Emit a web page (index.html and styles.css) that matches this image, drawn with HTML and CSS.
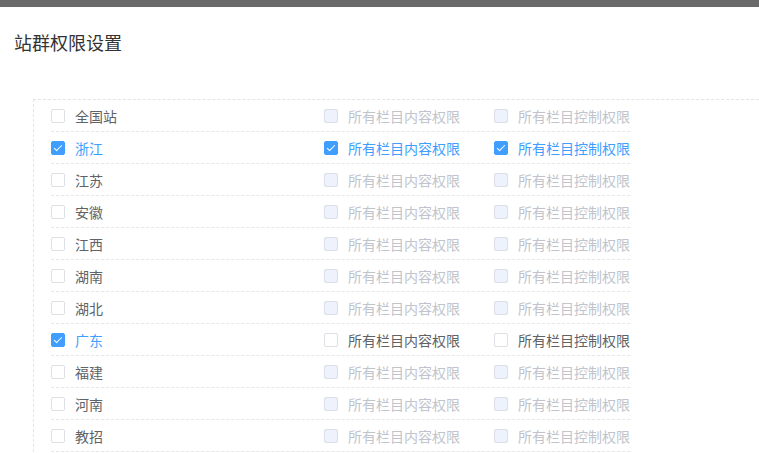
FILE: index.html
```html
<!DOCTYPE html>
<html>

<head>
    <title>站群权限设置</title>
    <link rel="stylesheet" href="styles.css">
</head>

<body>
    <div class="topbar"></div>
    <h2 class="title">站群权限设置</h2>

    <div class="site-list">
        <div class="row">
            <label class="check"><span class="box"></span><span class="text">全国站</span></label>
            <label class="check disabled"><span class="box"></span><span class="text">所有栏目内容权限</span></label>
            <label class="check disabled"><span class="box"></span><span class="text">所有栏目控制权限</span></label>
        </div>
        <div class="row">
            <label class="check checked"><span class="box"></span><span class="text">浙江</span></label>
            <label class="check checked"><span class="box"></span><span class="text">所有栏目内容权限</span></label>
            <label class="check checked"><span class="box"></span><span class="text">所有栏目控制权限</span></label>
        </div>
        <div class="row">
            <label class="check"><span class="box"></span><span class="text">江苏</span></label>
            <label class="check disabled"><span class="box"></span><span class="text">所有栏目内容权限</span></label>
            <label class="check disabled"><span class="box"></span><span class="text">所有栏目控制权限</span></label>
        </div>
        <div class="row">
            <label class="check"><span class="box"></span><span class="text">安徽</span></label>
            <label class="check disabled"><span class="box"></span><span class="text">所有栏目内容权限</span></label>
            <label class="check disabled"><span class="box"></span><span class="text">所有栏目控制权限</span></label>
        </div>
        <div class="row">
            <label class="check"><span class="box"></span><span class="text">江西</span></label>
            <label class="check disabled"><span class="box"></span><span class="text">所有栏目内容权限</span></label>
            <label class="check disabled"><span class="box"></span><span class="text">所有栏目控制权限</span></label>
        </div>
        <div class="row">
            <label class="check"><span class="box"></span><span class="text">湖南</span></label>
            <label class="check disabled"><span class="box"></span><span class="text">所有栏目内容权限</span></label>
            <label class="check disabled"><span class="box"></span><span class="text">所有栏目控制权限</span></label>
        </div>
        <div class="row">
            <label class="check"><span class="box"></span><span class="text">湖北</span></label>
            <label class="check disabled"><span class="box"></span><span class="text">所有栏目内容权限</span></label>
            <label class="check disabled"><span class="box"></span><span class="text">所有栏目控制权限</span></label>
        </div>
        <div class="row">
            <label class="check checked"><span class="box"></span><span class="text">广东</span></label>
            <label class="check"><span class="box"></span><span class="text">所有栏目内容权限</span></label>
            <label class="check"><span class="box"></span><span class="text">所有栏目控制权限</span></label>
        </div>
        <div class="row">
            <label class="check"><span class="box"></span><span class="text">福建</span></label>
            <label class="check disabled"><span class="box"></span><span class="text">所有栏目内容权限</span></label>
            <label class="check disabled"><span class="box"></span><span class="text">所有栏目控制权限</span></label>
        </div>
        <div class="row">
            <label class="check"><span class="box"></span><span class="text">河南</span></label>
            <label class="check disabled"><span class="box"></span><span class="text">所有栏目内容权限</span></label>
            <label class="check disabled"><span class="box"></span><span class="text">所有栏目控制权限</span></label>
        </div>
        <div class="row">
            <label class="check"><span class="box"></span><span class="text">教招</span></label>
            <label class="check disabled"><span class="box"></span><span class="text">所有栏目内容权限</span></label>
            <label class="check disabled"><span class="box"></span><span class="text">所有栏目控制权限</span></label>
        </div>
    </div>
</body>

</html>
```

FILE: styles.css
```css
body {
    margin: 0;
    font-family: "Noto Sans CJK SC", "Noto Sans", sans-serif;
    background-color: #fff;
    overflow: hidden;
}

.topbar {
    height: 7px;
    background-color: #6a6a6a;
}

.title {
    margin: 0;
    padding: 22px 0 0 14px;
    height: 70px;
    font-size: 18px;
    font-weight: normal;
    line-height: 26px;
    color: #333;
}

/* dashed box with the site rows, runs off the right edge */
.site-list {
    margin-left: 33px;
    padding: 0 17px;
    border: 1px dashed #e4e4e4;
    border-right: none;
    border-bottom: none;
}

.row {
    display: grid;
    grid-template-columns: 273px 170px 136px;
    align-items: center;
    width: fit-content;
    height: 31px;
    border-bottom: 1px dashed #e4e7ed;
}

.check {
    display: flex;
    align-items: center;
    font-size: 14px;
    color: #606266;
    cursor: pointer;
    white-space: nowrap;
}

.check .box {
    position: relative;
    width: 12px;
    height: 12px;
    margin-right: 10px;
    border: 1px solid #dcdfe6;
    border-radius: 2px;
    background-color: #fff;
    flex: none;
}

.check.checked {
    color: #409eff;
}

.check.checked .box {
    background-color: #409eff;
    border-color: #409eff;
}

.check.checked .box::after {
    content: "";
    position: absolute;
    left: 4px;
    top: 1px;
    width: 3px;
    height: 7px;
    border: 1px solid #fff;
    border-left: 0;
    border-top: 0;
    transform: rotate(45deg);
}

.check.disabled {
    color: #c0c4cc;
    cursor: not-allowed;
}

.check.disabled .box {
    background-color: #edf2fc;
    border-color: #dcdfe6;
}
```
